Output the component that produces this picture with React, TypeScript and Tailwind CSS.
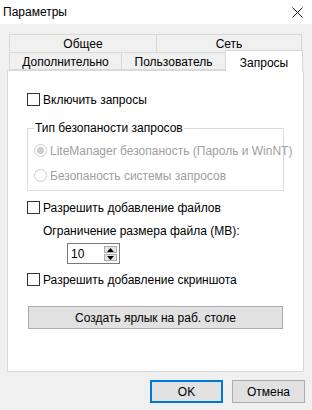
import React from "react";

const Check = ({ label }: { label: string }) => (
  <div className="flex items-center h-[13px] whitespace-nowrap">
    <div className="w-[13px] h-[13px] border border-[#333333] bg-white shrink-0" />
    <span className="ml-[3px] leading-none">{label}</span>
  </div>
);

const Radio = ({ label, checked }: { label: string; checked?: boolean }) => (
  <div className="flex items-center h-[13px] text-[#a0a0a0] whitespace-nowrap">
    <div className="w-[13px] h-[13px] rounded-full border border-[#cccccc] bg-white shrink-0 flex items-center justify-center">
      {checked && <div className="w-[7px] h-[7px] rounded-full bg-[#cccccc]" />}
    </div>
    <span className="ml-[3px] leading-none">{label}</span>
  </div>
);

export default function App() {
  return (
    <div
      className="w-[312px] h-[410px] bg-[#f0f0f0] text-[12px] text-black flex flex-col whitespace-nowrap"
      style={{ fontFamily: '"Liberation Sans", Arial, sans-serif' }}
    >
      {/* title bar */}
      <div className="h-[24px] bg-white flex items-center justify-between pl-[3px] pr-[9px] shrink-0">
        <span className="text-[12px] leading-none">Параметры</span>
        <svg width="11" height="11" viewBox="0 0 11 11">
          <path d="M0.5 0.5 L10.5 10.5 M10.5 0.5 L0.5 10.5" stroke="#111" strokeWidth="1" />
        </svg>
      </div>

      {/* tabs + panel */}
      <div className="ml-[7px] w-[297px] mt-[10px] flex flex-col">
        <div className="ml-[2px] w-[293px] flex h-[18px]">
          <div className="w-[148px] border border-[#d9d9d9] border-b-0 flex items-center justify-center pt-[1px]">Общее</div>
          <div className="flex-1 border border-[#d9d9d9] border-l-0 border-b-0 flex items-center justify-center pt-[1px]">Сеть</div>
        </div>
        <div className="ml-[2px] flex items-end h-[18px] relative z-10">
          <div className="w-[113px] h-[18px] border border-[#d9d9d9] flex items-center justify-center pt-[1px]">Дополнительно</div>
          <div className="w-[104px] h-[18px] border border-[#d9d9d9] border-l-0 flex items-center justify-center pt-[1px]">Пользователь</div>
          <div className="w-[78px] h-[21px] -mb-[1px] -ml-[1px] bg-white border border-[#d9d9d9] border-b-0 flex items-start justify-center pt-[3px]">Запросы</div>
        </div>
        <div className="h-[302px] bg-white border border-[#d9d9d9] flex flex-col pl-[19px] pt-[22px]">
          <Check label="Включить запросы" />
          <div className="mt-[22px] w-[257px] h-[63px] border border-[#dcdcdc] relative flex flex-col pl-[6px] pt-[15px] gap-[12px]">
            <span className="absolute -top-[8px] left-[6px] bg-white px-[1px] leading-[14px]">Тип безопаности запросов</span>
            <Radio label="LiteManager безопаность (Пароль и WinNT)" checked />
            <Radio label="Безопаность системы запросов" />
          </div>
          <div className="mt-[10px]">
            <Check label="Разрешить добавление файлов" />
          </div>
          <div className="ml-[16px] mt-[11px] leading-none">Ограничение размера файла (MB):</div>
          <div className="ml-[40px] mt-[6px] w-[53px] h-[21px] border border-[#7a7a7a] bg-white flex items-center">
            <span className="ml-[3px] flex-1 leading-none">10</span>
            <div className="flex flex-col mr-[2px] gap-[1px]">
              <div className="w-[13px] h-[7px] bg-[#e5e5e5] border border-[#adadad] flex items-center justify-center">
                <svg width="7" height="4" viewBox="0 0 7 4"><path d="M0 4 L3.5 0 L7 4 Z" fill="#000" /></svg>
              </div>
              <div className="w-[13px] h-[7px] bg-[#e5e5e5] border border-[#adadad] flex items-center justify-center">
                <svg width="7" height="4" viewBox="0 0 7 4"><path d="M0 0 L3.5 4 L7 0 Z" fill="#000" /></svg>
              </div>
            </div>
          </div>
          <div className="mt-[9px]">
            <Check label="Разрешить добавление скриншота" />
          </div>
          <div className="mt-[20px] ml-[1px] w-[255px] h-[23px] bg-[#e1e1e1] border border-[#adadad] flex items-center justify-center">
            Создать ярлык на раб. столе
          </div>
        </div>
      </div>

      {/* footer buttons */}
      <div className="flex justify-end mt-[8px] pr-[7px] gap-[9px]">
        <div className="w-[73px] h-[23px] bg-[#e1e1e1] border-2 border-[#0078d7] flex items-center justify-center">OK</div>
        <div className="w-[73px] h-[23px] bg-[#e1e1e1] border border-[#adadad] flex items-center justify-center">Отмена</div>
      </div>
    </div>
  );
}
